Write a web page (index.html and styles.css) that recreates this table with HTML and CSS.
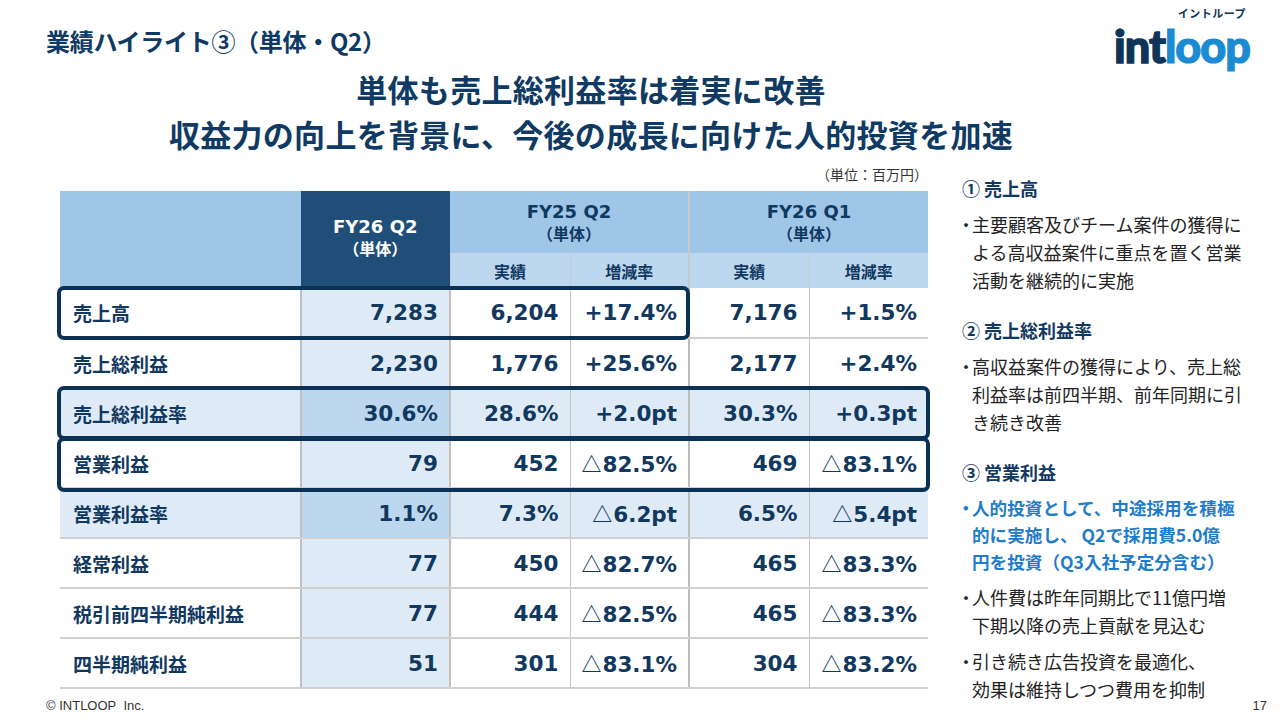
FILE: index.html
```html
<!DOCTYPE html>
<html lang="ja">
<head>
<meta charset="utf-8">
<link rel="stylesheet" href="styles.css">
</head>
<body>
<div class="slide">
  <header class="top">
    <h1 class="title">業績ハイライト③（単体・Q2）</h1>
    <div class="logo">
      <span class="logo-kana">イントループ</span>
      <span class="logo-word"><span class="logo-int">int</span><span class="logo-loop">loop</span></span>
    </div>
  </header>
  <div class="headline">
    <p>単体も売上総利益率は着実に改善</p>
    <p>収益力の向上を背景に、今後の成長に向けた人的投資を加速</p>
  </div>
  <main class="body">
    <section class="table-col">
      <div class="unit">（単位：百万円）</div>
      <div class="table-wrap">
        <table class="fin">
          <colgroup>
            <col class="c-label"><col class="c-main"><col class="c-a"><col class="c-b"><col class="c-a"><col class="c-b">
          </colgroup>
          <thead>
            <tr class="h1">
              <th rowspan="2" class="blank"></th>
              <th rowspan="2" class="main-h"><span class="fy">FY26 Q2</span><span class="sub">（単体）</span></th>
              <th colspan="2" class="grp"><span class="fy">FY25 Q2</span><span class="sub">（単体）</span></th>
              <th colspan="2" class="grp sep"><span class="fy">FY26 Q1</span><span class="sub">（単体）</span></th>
            </tr>
            <tr class="h2">
              <th>実績</th><th>増減率</th><th class="sep">実績</th><th>増減率</th>
            </tr>
          </thead>
          <tbody>
            <tr><td class="lbl">売上高</td><td class="mv">7,283</td><td>6,204</td><td>+17.4%</td><td class="sep">7,176</td><td>+1.5%</td></tr>
            <tr><td class="lbl">売上総利益</td><td class="mv">2,230</td><td>1,776</td><td>+25.6%</td><td class="sep">2,177</td><td>+2.4%</td></tr>
            <tr class="rate"><td class="lbl">売上総利益率</td><td class="mv">30.6%</td><td>28.6%</td><td>+2.0pt</td><td class="sep">30.3%</td><td>+0.3pt</td></tr>
            <tr><td class="lbl">営業利益</td><td class="mv">79</td><td>452</td><td><span class="tri">△</span>82.5%</td><td class="sep">469</td><td><span class="tri">△</span>83.1%</td></tr>
            <tr class="rate"><td class="lbl">営業利益率</td><td class="mv">1.1%</td><td>7.3%</td><td><span class="tri">△</span>6.2pt</td><td class="sep">6.5%</td><td><span class="tri">△</span>5.4pt</td></tr>
            <tr><td class="lbl">経常利益</td><td class="mv">77</td><td>450</td><td><span class="tri">△</span>82.7%</td><td class="sep">465</td><td><span class="tri">△</span>83.3%</td></tr>
            <tr><td class="lbl">税引前四半期純利益</td><td class="mv">77</td><td>444</td><td><span class="tri">△</span>82.5%</td><td class="sep">465</td><td><span class="tri">△</span>83.3%</td></tr>
            <tr><td class="lbl">四半期純利益</td><td class="mv">51</td><td>301</td><td><span class="tri">△</span>83.1%</td><td class="sep">304</td><td><span class="tri">△</span>83.2%</td></tr>
          </tbody>
        </table>
        <div class="hl hl-1"></div>
        <div class="hl hl-2"></div>
        <div class="hl hl-3"></div>
      </div>
    </section>
    <aside class="notes">
      <h2 class="note-h">① 売上高</h2>
      <p class="pt">主要顧客及びチーム案件の獲得に<br>よる高収益案件に重点を置く営業<br>活動を継続的に実施</p>
      <h2 class="note-h">② 売上総利益率</h2>
      <p class="pt">高収益案件の獲得により、売上総<br>利益率は前四半期、前年同期に引<br>き続き改善</p>
      <h2 class="note-h">③ 営業利益</h2>
      <p class="pt blue">人的投資として、中途採用を積極<br>的に実施し、 Q2で採用費5.0億<br>円を投資（Q3入社予定分含む）</p>
      <p class="pt">人件費は昨年同期比で11億円増<br>下期以降の売上貢献を見込む</p>
      <p class="pt">引き続き広告投資を最適化、<br>効果は維持しつつ費用を抑制</p>
    </aside>
  </main>
  <footer class="foot">
    <span class="copy">© INTLOOP&nbsp; Inc.</span>
    <span class="page">17</span>
  </footer>
</div>
</body>
</html>
```

FILE: styles.css
```css
* { box-sizing: border-box; margin: 0; padding: 0; }
html, body { width: 1280px; height: 720px; background: #fff; overflow: hidden; }
body {
  font-family: "Noto Sans CJK JP", "Noto Sans", sans-serif;
  color: #11385f;
}
.slide { width: 1280px; height: 720px; position: relative; display: flex; flex-direction: column; }

.top {
  display: flex;
  justify-content: space-between;
  align-items: flex-start;
  padding: 0 30px 0 46px;
  height: 66px;
}
.title {
  margin-top: 26px;
  font-size: 24px;
  font-weight: 700;
  letter-spacing: -0.3px;
  line-height: 30px;
  color: #0f3a63;
}
.logo {
  margin-top: 7px;
  display: flex;
  flex-direction: column;
  align-items: flex-end;
}
.logo-kana {
  font-size: 11px;
  font-weight: 700;
  line-height: 12px;
  color: #0e3559;
  margin-right: 4px;
  letter-spacing: 0.5px;
}
.logo-word {
  font-family: "Lato", "Noto Sans", sans-serif;
  font-weight: 900;
  font-size: 45px;
  line-height: 38px;
  letter-spacing: -1px;
  margin-top: 8px;
}
.logo-int { color: #0e3559; -webkit-text-stroke: 1.4px #0e3559; }
.logo-loop { color: #1b8bd3; -webkit-text-stroke: 1.2px #1b8bd3; }

.headline {
  padding-right: 98px;
  text-align: center;
  font-size: 31px;
  font-weight: 700;
  line-height: 45px;
  color: #0f3a63;
  letter-spacing: 0.3px;
}

.body {
  display: flex;
  align-items: flex-start;
  padding-left: 60px;
  margin-top: 8px;
}
.table-col { width: 870px; }
.unit {
  text-align: right;
  font-size: 14px;
  line-height: 20px;
  color: #333;
  padding-right: 2px;
  margin-bottom: 7px;
}
.table-wrap { position: relative; width: 868px; }
.fin {
  width: 868px;
  border-collapse: collapse;
  table-layout: fixed;
}
.c-label { width: 241px; }
.c-main { width: 149px; }
.c-a { width: 120px; }
.c-b { width: 119px; }

.fin th { font-weight: 700; color: #11385f; }
.h1 th { height: 62px; background: #9fc5e7; vertical-align: top; padding-top: 10px; }
.h1 th.blank { background: #9fc5e7; }
.h1 th.main-h { background: #1f4e79; color: #fff; vertical-align: top; padding-top: 25px; }
.fy { display: block; font-family: "DejaVu Sans", sans-serif; font-size: 18px; line-height: 22px; }
.sub { display: block; font-size: 16px; line-height: 20px; }
.h2 th { height: 35px; background: #bdd7ee; font-size: 16px; line-height: 20px; border-left: 1px solid #c9c9c9; }
.h1 th.sep, .h2 th.sep { border-left: 2px solid #c9c9c9; }

.fin td {
  height: 50px;
  font-family: "DejaVu Sans", "Noto Sans CJK JP", sans-serif;
  font-weight: 700;
  font-size: 21.5px;
  text-align: right;
  padding: 0 11px 0 0;
  border-bottom: 2px solid #d0d0d0;
  border-left: 1px solid #c4c4c4;
  color: #11385f;
  white-space: nowrap;
}
.fin td .tri { font-family: "Noto Sans CJK JP", sans-serif; font-weight: 700; font-size: 20px; margin-right: 1px; }
.fin td.sep { border-left: 2px solid #bdbdbd; }
.fin td.lbl {
  font-family: "Noto Sans CJK JP", sans-serif;
  font-size: 19px;
  text-align: left;
  padding-left: 13px;
  border-left: none;
}
.fin td.mv { background: #deebf7; border-left: 2px solid #c0c0c0; border-right: 2px solid #c0c0c0; }
.fin tr.rate td { background: #deebf7; }
.fin tr.rate td.mv { background: #bdd7ee; }

.hl {
  position: absolute;
  border: 4px solid #0b3157;
  border-radius: 7px;
  pointer-events: none;
}
.hl-1 { left: -3px; top: 95px; width: 633px; height: 54px; }
.hl-2 { left: -3px; top: 195px; width: 873px; height: 54px; }
.hl-3 { left: -3px; top: 246px; width: 873px; height: 55px; }

.notes {
  width: 300px;
  margin-left: 30px;
  padding-top: 12px;
}
.note-h {
  font-size: 18px;
  font-weight: 700;
  line-height: 24px;
  color: #11385f;
  margin-left: 2px;
  margin-bottom: 10px;
}
.pt {
  position: relative;
  padding-left: 12px;
  font-size: 18px;
  line-height: 28px;
  color: #222;
  margin-bottom: 8px;
  white-space: nowrap;
}
.pt::before {
  content: "・";
  position: absolute;
  left: -3px;
  top: 0;
}
.pt + .note-h { margin-top: 24px; }
.pt.blue { color: #1f7cc9; font-weight: 700; line-height: 27px; font-size: 17.6px; }

.foot {
  position: absolute;
  left: 0; right: 0; bottom: 6px;
  display: flex;
  justify-content: space-between;
  padding: 0 13px 0 46px;
  font-family: "Liberation Sans", "Noto Sans", sans-serif;
  font-size: 13px;
  line-height: 16px;
  color: #333;
}
```
